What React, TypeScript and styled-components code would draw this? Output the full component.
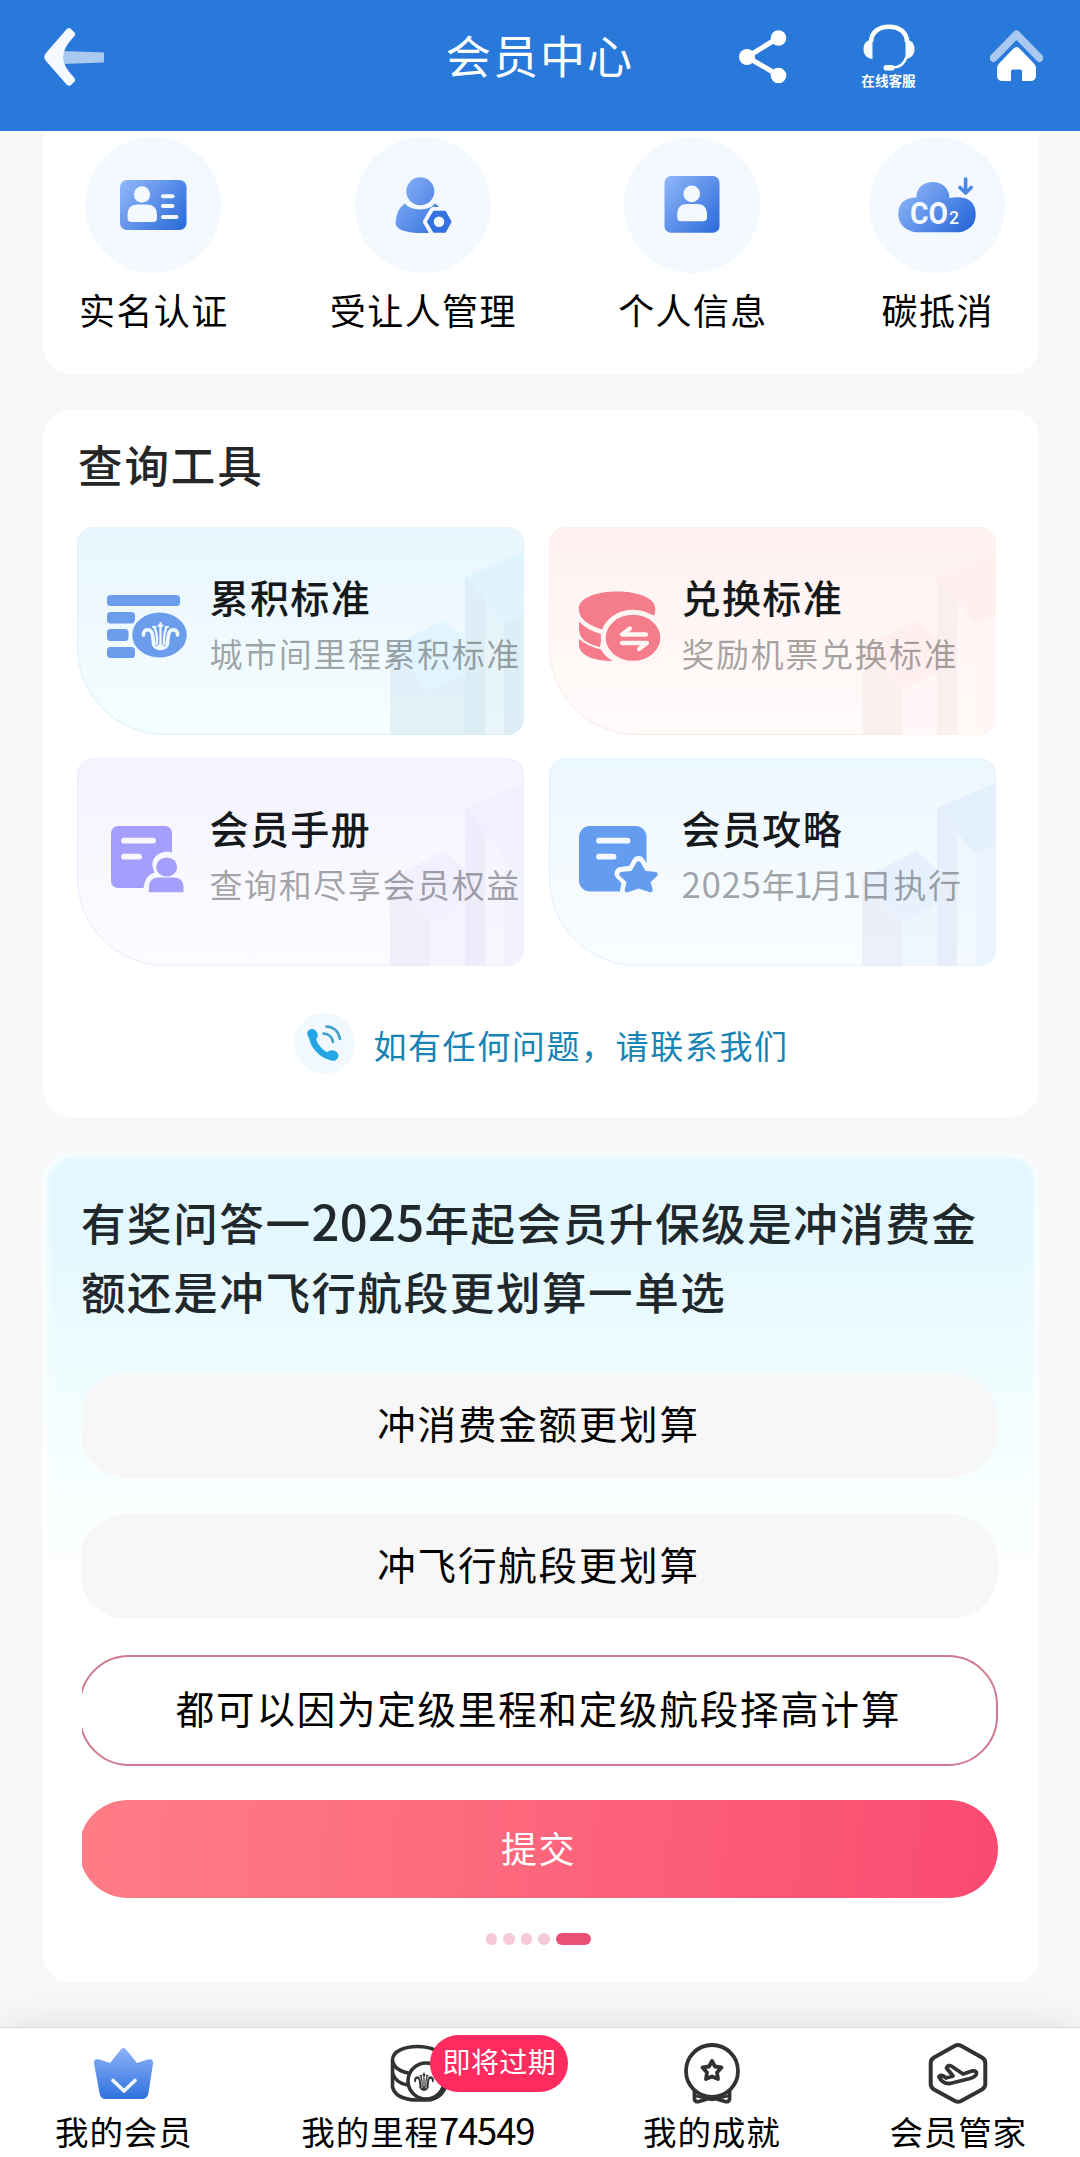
import React from "react";
import styled, { createGlobalStyle } from "styled-components";

const GlobalStyle = createGlobalStyle`
  * { box-sizing: border-box; }
  body {
    margin: 0;
    background: #f8f8f8;
    font-family: "Noto Sans CJK SC", "Noto Sans", sans-serif;
    color: #000;
  }
  button { font: inherit; border: 0; padding: 0; background: none; color: inherit; }
  h1, h2, h3, p { margin: 0; font-weight: 400; }
  svg { display: block; flex: none; }
`;

const Screen = styled.div`
  width: 1080px;
  height: 2157px;
  display: flex;
  flex-direction: column;
  overflow: hidden;
  background: #f8f8f8;
`;

/* ---------- header ---------- */

const Header = styled.header`
  flex: none;
  height: 131px;
  padding: 0 37px 18px 44px;
  display: grid;
  grid-template-columns: 1fr auto 1fr;
  align-items: center;
  background: #2979db;
  color: #fff;
`;

const HeaderTitle = styled.h1`
  font-size: 45px;
  line-height: 60px;
  letter-spacing: 2.1px;
  margin-left: -7px;
  padding-bottom: 3px;
`;

const HeaderActions = styled.div`
  display: flex;
  justify-content: flex-end;
  align-items: center;
  gap: 74px;
`;

const Service = styled.div`
  display: flex;
  flex-direction: column;
  align-items: center;
  width: 55px;
  padding-bottom: 2px;
`;

const ServiceLabel = styled.span`
  font-size: 13.6px;
  line-height: 16px;
  font-weight: 700;
  white-space: nowrap;
`;

/* ---------- cards ---------- */

const Content = styled.main`
  flex: none;
  height: 1896px;
  padding: 0 41px 0 43px;
  display: flex;
  flex-direction: column;
  gap: 36px;
`;

const ShortcutCard = styled.section`
  flex: none;
  height: 243px;
  padding: 6px 34px 0 36px;
  display: flex;
  justify-content: space-between;
  background: #fff;
  border-radius: 0 0 28px 28px;
`;

const Shortcut = styled.div`
  display: flex;
  flex-direction: column;
  align-items: center;
  gap: 12px;
`;

const ShortcutCircle = styled.div`
  width: 136px;
  height: 136px;
  border-radius: 50%;
  background: #f3f9ff;
`;

const ShortcutLabel = styled.span`
  font-size: 36px;
  line-height: 48px;
  letter-spacing: 1.4px;
  margin-right: -1.4px;
  white-space: nowrap;
`;

const ToolCard = styled.section`
  flex: none;
  height: 707px;
  padding: 25px 44px 0 34px;
  background: #fff;
  border-radius: 28px;
`;

const SectionTitle = styled.h2`
  font-size: 44.5px;
  line-height: 58px;
  letter-spacing: 1.9px;
  font-weight: 500;
  color: #262626;
  padding-left: 1px;
`;

const TileGrid = styled.div`
  margin-top: 34px;
  display: grid;
  grid-template-columns: 447px 447px;
  column-gap: 25px;
  row-gap: 23.5px;
`;

const Tile = styled.div<{ $top: string; $bottom: string; $edge: string }>`
  position: relative;
  height: 207.5px;
  padding: 0 0 8px 26px;
  display: flex;
  align-items: center;
  gap: 16.5px;
  overflow: hidden;
  border-radius: 17px 17px 17px 88px;
  background: linear-gradient(180deg, ${(p) => p.$top}, ${(p) => p.$bottom});
  box-shadow: inset 0 -1px 1px ${(p) => p.$edge}, inset 0 0 1px 1px ${(p) => p.$edge};
`;

const TileBackdrop = styled.svg`
  position: absolute;
  inset: 0;
`;

const TileText = styled.div`
  position: relative;
  display: flex;
  flex-direction: column;
  gap: 7px;
  margin-top: -6px;
`;

const TileTitle = styled.h3`
  font-size: 39px;
  line-height: 52px;
  letter-spacing: 1.4px;
  font-weight: 500;
  color: #15191c;
  white-space: nowrap;
`;

const TileSubtitle = styled.p`
  height: 48px;
  font-size: 33px;
  line-height: 48px;
  letter-spacing: 1.6px;
  color: rgba(20, 20, 20, 0.38);
  white-space: nowrap;
`;

/* Numerals run larger than the Chinese glyphs beside them. */
const Digits = styled.span<{ $size: number; $spacing: number; $tuck?: number }>`
  font-size: ${(p) => p.$size}px;
  line-height: 1;
  letter-spacing: ${(p) => p.$spacing}px;
  margin: 0 ${(p) => -(p.$tuck ?? 0)}px;
`;

const Contact = styled.div`
  margin-top: 47px;
  display: flex;
  justify-content: center;
  align-items: center;
  gap: 18px;
  padding-left: 11px;
`;

const ContactIcon = styled.div`
  width: 61px;
  height: 61px;
  border-radius: 50%;
  background: #f1f9ff;
`;

const ContactText = styled.span`
  font-size: 33px;
  line-height: 48px;
  letter-spacing: 1.6px;
  color: #1684b5;
  padding-top: 4px;
`;

/* ---------- quiz ---------- */

const QuizCard = styled.section`
  flex: none;
  height: 830px;
  padding: 34px 41px 0 39px;
  display: flex;
  flex-direction: column;
  border-radius: 28px;
  box-shadow: inset 0 0 7px 4px #fff;
  background: linear-gradient(180deg, #e1f7ff 0, #e5f8ff 100px, #ebfcff 180px, #f2fdff 260px, #fafffF 360px, #fff 440px);
`;

const Question = styled.h2`
  height: 186px;
  margin-left: -1px;
  font-size: 44.5px;
  line-height: 69px;
  letter-spacing: 1.6px;
  font-weight: 500;
  color: #20282b;
  white-space: nowrap;
`;

const Answers = styled.div`
  display: flex;
  flex-direction: column;
  overflow: hidden;
`;

const Option = styled.button<{ $selected?: boolean }>`
  flex: none;
  height: ${(p) => (p.$selected ? 111 : 105)}px;
  margin: 0 0 ${(p) => (p.$selected ? 34 : 36)}px -3px;
  border-radius: ${(p) => (p.$selected ? 50 : 48)}px;
  border: ${(p) => (p.$selected ? "2px solid #cf7a8d" : "0")};
  background: ${(p) => (p.$selected ? "#fff" : "#f7f7f7")};
  font-size: 38.5px;
  line-height: 50px;
  letter-spacing: 1.8px;
  padding-bottom: 7px;
`;

const Submit = styled.button`
  flex: none;
  height: 98px;
  margin-left: -3px;
  border-radius: 49px;
  padding-bottom: 4px;
  background: linear-gradient(95deg, #ff7d86 0%, #fc667c 50%, #f94a70 100%);
  color: #fff;
  font-size: 36px;
  letter-spacing: 1.5px;
`;

const Dots = styled.div`
  margin-top: 35px;
  display: flex;
  justify-content: center;
  gap: 6px;
  padding-right: 4px;
`;

const Dot = styled.i<{ $active?: boolean }>`
  width: ${(p) => (p.$active ? 35 : 11.5)}px;
  height: 12px;
  border-radius: 6px;
  background: ${(p) => (p.$active ? "#ea5075" : "#f5c9d8")};
`;

/* ---------- tab bar ---------- */

const TabBar = styled.nav`
  flex: none;
  height: 130px;
  padding: 14px 53px 0 55px;
  display: flex;
  justify-content: space-between;
  background: #fff;
  border-top: 1px solid #d9d9d9;
  box-shadow: 0 0 40px rgba(0, 0, 0, 0.11);
`;

const Tab = styled.div`
  position: relative;
  display: flex;
  flex-direction: column;
  align-items: center;
`;

const TabLabel = styled.span`
  height: 48px;
  margin-top: 3px;
  font-size: 33.5px;
  line-height: 48px;
  letter-spacing: 0.9px;
  white-space: nowrap;
`;

const Badge = styled.span`
  position: absolute;
  left: 129px;
  top: -7px;
  width: 138px;
  height: 57px;
  border-radius: 29px;
  background: #ff2b5e;
  color: #fff;
  font-size: 28px;
  line-height: 53px;
  letter-spacing: 0.4px;
  text-align: center;
`;

/* ---------- icons ---------- */

const BackIcon = () => (
  <svg width="60" height="58" viewBox="0 0 60 58">
    <path d="M18 23L60 24.500V34.500L18 36Z" fill="#a9c9f1" />
    <path d="M23 .8Q25-.7 27 1L30.500 4.500Q32 6 30 8.500Q19 20 19 29Q19 38 30 49.500Q32 52 30.500 53.500L27 57Q25 58.500 23 57L2 33Q-1.500 29 2 25Z" fill="#f4faff" />
  </svg>
);

const ShareIcon = () => (
  <svg width="48" height="54" viewBox="0 0 48 54">
    <path d="M8 27L39 8M8 27L39 45" stroke="#fff" strokeWidth="5" />
    <circle cx="8" cy="27" r="8" fill="#fff" />
    <circle cx="39.500" cy="8" r="7.800" fill="#fff" />
    <circle cx="39.500" cy="45.500" r="7.800" fill="#fff" />
  </svg>
);

const HeadsetIcon = () => (
  <svg width="52" height="48" viewBox="0 0 52 48">
    <path d="M8 18C8 8 16 2.800 26 2.800S44 8 44 18" fill="none" stroke="#fff" strokeWidth="4.600" />
    <path d="M9.500 15.500C3 16 .5 20 .5 25C.5 31 4 34.500 9.500 35Z" fill="#f4faff" />
    <path d="M42.500 15.500C49 16 51.500 20 51.500 25C51.500 31 48 34.500 42.500 35Z" fill="#f4faff" />
    <path d="M43.500 33C41.500 39 37 43.500 30 43.500" fill="none" stroke="#fff" strokeWidth="2.600" />
    <rect x="20.500" y="41" width="11" height="5.600" rx="2.800" fill="#fff" />
  </svg>
);

const HomeIcon = () => (
  <svg width="53" height="54" viewBox="0 0 53 54">
    <path d="M3.500 28L26.500 4.500L49.500 28" fill="none" stroke="#a9c9f1" strokeWidth="7.800" strokeLinejoin="round" strokeLinecap="round" />
    <path d="M23.500 18.500Q26.500 15.500 29.500 18.500L44 33.500Q46 36 46 38V45Q46 51 40.500 51H32V41.500Q32 39.500 30 39.500H23Q21 39.500 21 41.500V51H12.500Q7 51 7 45V38Q7 36 9 33.500Z" fill="#fff" />
  </svg>
);

const Blue = ({ id }: { id: string }) => (
  <defs>
    <linearGradient id={id} x1="35" y1="42" x2="98" y2="96" gradientUnits="userSpaceOnUse">
      <stop offset="0" stopColor="#93b9fb" />
      <stop offset="1" stopColor="#2768d8" />
    </linearGradient>
  </defs>
);

const IdCardIcon = () => (
  <svg width="136" height="136" viewBox="0 0 136 136">
    <Blue id="b1" />
    <rect x="35" y="43" width="66.500" height="50" rx="7" fill="url(#b1)" />
    <g fill="#f3f9ff">
      <circle cx="57" cy="57.500" r="8.200" />
      <path d="M42.500 78Q42.500 67.500 52 67.500H62.500Q72 67.500 72 78V81Q72 85 68 85H46.500Q42.500 85 42.500 81Z" />
      <rect x="76" y="57.300" width="13.500" height="4" rx="2" />
      <rect x="76" y="67" width="13.500" height="4" rx="2" />
      <rect x="76" y="78" width="17.500" height="4" rx="2" />
    </g>
  </svg>
);

const TransfereeIcon = () => (
  <svg width="136" height="136" viewBox="0 0 136 136">
    <Blue id="b2" />
    <circle cx="65.300" cy="54.300" r="14" fill="url(#b2)" />
    <path d="M50 66.300C55 74.500 75 74.500 80 66.300Q92 75 92 88L80 95.700Q40.500 98 40.500 85.500Q41.500 72 50 66.300Z" fill="url(#b2)" />
    <path d="M78 73.500H91L97 84.700L91 96H78L71.500 84.700Z" fill="#3272de" stroke="#f3f9ff" strokeWidth="7" strokeLinejoin="round" />
    <path d="M79 74.700H90L95.500 84.700L90 94.700H79L73 84.700Z" fill="#3272de" stroke="#3272de" strokeWidth="2" strokeLinejoin="round" />
    <circle cx="84" cy="84.700" r="5.300" fill="#f3f9ff" />
  </svg>
);

const ProfileIcon = () => (
  <svg width="136" height="136" viewBox="0 0 136 136">
    <Blue id="b3" />
    <rect x="40.500" y="39" width="55" height="56.700" rx="6.500" fill="url(#b3)" />
    <circle cx="67.700" cy="56.900" r="8.300" fill="#f3f9ff" />
    <path d="M53.200 78Q53.200 67 63 67H73Q83 67 83 78V80.500Q83 84.300 79 84.300H57.200Q53.200 84.300 53.200 80.500Z" fill="#f3f9ff" />
  </svg>
);

const CarbonIcon = () => (
  <svg width="136" height="136" viewBox="0 0 136 136">
    <Blue id="b4" />
    <path d="M47.300 60.500C47.500 39.500 80.300 40 80.500 61Q106.700 57 106.700 78Q106.700 91 91.500 95.300H45.500Q29.300 91 29.300 77Q29.300 61 47.300 60.500Z" fill="url(#b4)" />
    <path d="M96.600 42V55M91 50.500L96.600 56L102.200 50.500" fill="none" stroke="#4d87e5" strokeWidth="3.600" strokeLinecap="round" strokeLinejoin="round" />
    <text x="41" y="87" fontFamily="Roboto, sans-serif" fontWeight="700" fontSize="32" textLength="38" lengthAdjust="spacingAndGlyphs" fill="#f3f9ff">CO</text>
    <text x="80" y="87" fontFamily="Roboto, sans-serif" fontWeight="500" fontSize="19" textLength="10" lengthAdjust="spacingAndGlyphs" fill="#f3f9ff">2</text>
  </svg>
);

/* Flowering crest used on the mileage coins. */
const Crest = ({ color }: { color: string }) => (
  <g fill="none" stroke={color} strokeLinecap="round">
    <path d="M-17 0C-18-6-10-7-8.500-2C-7 3-7.500 6-6.500 9M17 0C18-6 10-7 8.500-2C7 3 7.500 6 6.500 9" strokeWidth="3.600" />
    <path d="M-3.500 9C-3-1-5-5-6-8M3.500 9C3-1 5-5 6-8M0 9V-9" strokeWidth="2.300" />
    <path d="M-2-9.500H2M-7.500-8H-5M5-8H7.500M0-12V-8" strokeWidth="2.200" />
    <path d="M-9 7L-4 11.500L0 8L4 11.500L9 7C9 18-9 18-9 7Z" fill={color} stroke="none" />
  </g>
);

const AccrualIcon = () => (
  <svg width="90" height="80" viewBox="0 0 90 80">
    <g fill="#6b9dec">
      <rect x="4" y="8" width="73" height="11" rx="3.500" />
      <rect x="4" y="25" width="28" height="11.500" rx="3.500" />
      <rect x="4" y="42" width="21.500" height="12" rx="3.500" />
      <rect x="4" y="60" width="28" height="11" rx="3.500" />
      <ellipse cx="56.500" cy="48" rx="28.500" ry="23.800" stroke="#f0fbff" strokeWidth="2.500" />
    </g>
    <g transform="translate(57.500 48)"><Crest color="#f0fbff" /></g>
  </svg>
);

const RedeemIcon = () => (
  <svg width="90" height="80" viewBox="0 0 90 80">
    <g fill="#f47c8b">
      <path d="M3.700 21.500C4-1.300 80-1.300 80.300 21.500Q80.500 26 79 28.500L60 23Q33 24 29 43C15 39 4 33 3.700 21.500Z" />
      <path d="M4 34.500Q12 43 27 47.500L25 60C12 57 3.700 52 4 41Z" />
      <path d="M4 52Q12 59 26 62.500Q30 70 38 74C18 74 3.500 68 4 57Z" />
      <ellipse cx="58" cy="50.800" rx="29.800" ry="25.500" stroke="#fff6f4" strokeWidth="5" />
    </g>
    <path d="M71 47.500H47L55 41.500M47 56H72L64 62" fill="none" stroke="#fff6f4" strokeWidth="4.300" strokeLinecap="round" strokeLinejoin="round" />
  </svg>
);

const HandbookIcon = () => (
  <svg width="90" height="80" viewBox="0 0 90 80">
    <rect x="8" y="8" width="61" height="62" rx="7" fill="#a49ffc" />
    <g fill="none" stroke="#f9f8ff" strokeWidth="5.800" strokeLinecap="round">
      <path d="M21 22.700H50M21 38.700H36" />
    </g>
    <path d="M40.500 80V70Q42 57 51.500 54.500C42 34 70 28 77 40L84 60V80Z" fill="#f9f8fe" />
    <ellipse cx="63.700" cy="49" rx="10.500" ry="9.500" fill="#a49ffc" />
    <path d="M46 74.200V69Q46 59.500 56 59.500H70Q80.500 59.500 80.500 69V74.200Z" fill="#a49ffc" />
  </svg>
);

const GuideIcon = () => (
  <svg width="90" height="80" viewBox="0 0 90 80">
    <rect x="4" y="8" width="67.500" height="65.500" rx="11" fill="#649df0" />
    <g fill="none" stroke="#f3faff" strokeWidth="5.800" strokeLinecap="round">
      <path d="M24 22.700H52.500M24 38.700H38.500" />
    </g>
    <path d="M63.500 44.500L69 54L81.500 55.500L73.500 63L76 73L63.500 69.500L51.500 73L53.500 63L46 55.500L58 54Z" fill="#f5faff" stroke="#f5faff" strokeWidth="13" strokeLinejoin="round" />
    <path d="M63.500 45.500L69 55L80.500 56.300L73 63.500L75.500 72L63.500 68L52 72L54 63.500L46.500 56.300L58 55Z" fill="#649df0" stroke="#649df0" strokeWidth="4.500" strokeLinejoin="round" />
  </svg>
);

const PhoneIcon = () => (
  <svg width="61" height="61" viewBox="0 0 61 61" fill="none">
    <path d="M18 21C18 32 28 43.500 39 44" stroke="#22a6e4" strokeWidth="6.500" />
    <ellipse cx="18.500" cy="21.500" rx="5.800" ry="5" transform="rotate(55 18.500 21.500)" fill="#22a6e4" />
    <ellipse cx="38.500" cy="42.500" rx="6" ry="5.200" transform="rotate(15 38.500 42.500)" fill="#22a6e4" />
    <path d="M32.500 13.500Q43.500 14 46 26M29.500 20.500Q37.500 21 39 29" stroke="#419fcb" strokeWidth="2.600" strokeLinecap="round" />
  </svg>
);

const CrownIcon = () => (
  <svg width="62" height="62" viewBox="0 0 62 62">
    <defs>
      <linearGradient id="crown" x1="0" y1="0" x2="0" y2="1">
        <stop offset="0" stopColor="#8eb3f8" />
        <stop offset="1" stopColor="#2f70dd" />
      </linearGradient>
    </defs>
    <path d="M27.500 8Q30.500 4 33.500 8L44 21L54.500 17.500Q60.500 16 60 21.500L55.500 51Q54.500 57 48.500 57H12.500Q7.500 57 6.500 51L1 21.500Q.5 16 6.500 17.500L17 21Z" fill="url(#crown)" />
    <path d="M20 38.500L31 49L42 38.500" fill="none" stroke="#f6faff" strokeWidth="3.600" strokeLinecap="round" strokeLinejoin="round" />
  </svg>
);

const CoinsIcon = () => (
  <svg width="60" height="62" viewBox="-1.500 0 60 62" fill="none" stroke="#303234" strokeWidth="3.600">
    <path d="M3 18C3 0 53 0 53 18M3 18Q4 28 19 31M3 18V45Q6 57 26 58H38Q51 57 56 45M3 31Q6 41 18 43" />
    <circle cx="36.500" cy="39" r="18" fill="#fff" />
    <g transform="translate(34.500 39) scale(.52 .66)"><Crest color="#303234" /></g>
  </svg>
);

const MedalIcon = () => (
  <svg width="60" height="62" viewBox="0 0 60 62" fill="none" stroke="#303234" strokeWidth="3.800" strokeLinejoin="round">
    <path d="M12.500 46V57Q12.500 60.500 17 59.500L30 55.500L43 59.500Q47.500 60.500 47.500 57V46" />
    <path d="M14 54L30 58L46 54" strokeWidth="2.500" />
    <circle cx="30" cy="29" r="26" fill="#fff" />
    <path d="M30 19L33 24.500L39.500 25.500L35 30.500L36 37L30 34.500L24 37L25 30.500L20.500 25.500L27 24.500Z" strokeWidth="3.800" />
  </svg>
);

const StewardIcon = () => (
  <svg width="62" height="62" viewBox="0 0 60 62" fill="none" stroke="#303234" strokeWidth="4" strokeLinejoin="round" strokeLinecap="round">
    <path d="M27 3.800Q30 2 33 3.800L54 15.500Q57.300 17.500 57.300 21V42Q57.300 45.500 54 47.500L33 59Q30 60.500 27 59L6 47.500Q2.700 45.500 2.700 42V21Q2.700 17.500 6 15.500Z" />
    <path d="M11 34.500Q14 32 18 36L25 34L18.500 26Q20 22 24 24.500L35 32L44 29Q49 28.500 48.500 31.500Q48 34.500 42 36.500L22 41.500Q14 42 11 34.500Z" strokeWidth="3.800" />
  </svg>
);

/* ---------- data ---------- */

const shortcuts = [
  { label: "实名认证", Icon: IdCardIcon },
  { label: "受让人管理", Icon: TransfereeIcon },
  { label: "个人信息", Icon: ProfileIcon },
  { label: "碳抵消", Icon: CarbonIcon },
];

const effectiveDate = (
  <>
    <Digits $size={35} $spacing={0.6}>2025</Digits>年
    <Digits $size={35} $spacing={0.6} $tuck={3}>1</Digits>月
    <Digits $size={35} $spacing={0.6} $tuck={3}>1</Digits>日执行
  </>
);

const tools = [
  { title: "累积标准", sub: "城市间里程累积标准", Icon: AccrualIcon, top: "#e9f6ff", bottom: "#f5feff", edge: "#e2f4f9", roof: "#def3ff", side: "#dbecf5", front: "#daecf5" },
  { title: "兑换标准", sub: "奖励机票兑换标准", Icon: RedeemIcon, top: "#fff1f0", bottom: "#fffcfb", edge: "#fdeeec", roof: "#ffeeed", side: "#f9ebec", front: "#fff6f5" },
  { title: "会员手册", sub: "查询和尽享会员权益", Icon: HandbookIcon, top: "#f4f3ff", bottom: "#fcfcff", edge: "#efeefa", roof: "#f1efff", side: "#eceafa", front: "#f1f0fe" },
  { title: "会员攻略", sub: effectiveDate, Icon: GuideIcon, top: "#ebf7ff", bottom: "#fbfdff", edge: "#e9f2fc", roof: "#e3effd", side: "#e5ebf7", front: "#e9f3ff" },
];

const tabs = [
  { label: "我的会员", Icon: CrownIcon },
  { label: "我的里程", miles: "74549", Icon: CoinsIcon, badge: "即将过期" },
  { label: "我的成就", Icon: MedalIcon },
  { label: "会员管家", Icon: StewardIcon },
];

const Towers = ({ roof, side, front }: { roof: string; side: string; front: string }) => (
  <TileBackdrop width="447" height="208" viewBox="0 0 447 208">
    <path d="M388 50L447 25V208H388Z" fill={front} opacity=".45" />
    <path d="M388 50L447 25V86L427 97Z" fill={roof} opacity=".85" />
    <path d="M388 50L408 74V208H388Z" fill={side} opacity=".75" />
    <path d="M427 97L447 87V208H427Z" fill={front} opacity=".8" />
    <path d="M313 120L367 93L388 111V146L355 164Z" fill={roof} opacity=".85" />
    <path d="M313 120L353 163V208H313Z" fill={side} opacity=".75" />
    <path d="M353 163L408 138V208H353Z" fill={front} opacity=".75" />
    <path d="M388 146V208H408V138Z" fill={side} opacity=".6" />
  </TileBackdrop>
);

export default function App() {
  return (
    <>
      <GlobalStyle />
      <Screen>
        <Header>
          <BackIcon />
          <HeaderTitle>会员中心</HeaderTitle>
          <HeaderActions>
            <ShareIcon />
            <Service>
              <HeadsetIcon />
              <ServiceLabel>在线客服</ServiceLabel>
            </Service>
            <HomeIcon />
          </HeaderActions>
        </Header>

        <Content>
          <ShortcutCard>
            {shortcuts.map(({ label, Icon }) => (
              <Shortcut key={label}>
                <ShortcutCircle><Icon /></ShortcutCircle>
                <ShortcutLabel>{label}</ShortcutLabel>
              </Shortcut>
            ))}
          </ShortcutCard>

          <ToolCard>
            <SectionTitle>查询工具</SectionTitle>
            <TileGrid>
              {tools.map(({ title, sub, Icon, top, bottom, edge, roof, side, front }) => (
                <Tile key={title} $top={top} $bottom={bottom} $edge={edge}>
                  <Towers roof={roof} side={side} front={front} />
                  <Icon />
                  <TileText>
                    <TileTitle>{title}</TileTitle>
                    <TileSubtitle>{sub}</TileSubtitle>
                  </TileText>
                </Tile>
              ))}
            </TileGrid>
            <Contact>
              <ContactIcon><PhoneIcon /></ContactIcon>
              <ContactText>如有任何问题，请联系我们</ContactText>
            </Contact>
          </ToolCard>

          <QuizCard>
            <Question>
              有奖问答一<Digits $size={49} $spacing={0.3}>2025</Digits>年起会员升保级是冲消费金
              <br />
              额还是冲飞行航段更划算一单选
            </Question>
            <Answers>
              <Option>冲消费金额更划算</Option>
              <Option>冲飞行航段更划算</Option>
              <Option $selected>都可以因为定级里程和定级航段择高计算</Option>
              <Submit>提交</Submit>
            </Answers>
            <Dots>
              <Dot /><Dot /><Dot /><Dot /><Dot $active />
            </Dots>
          </QuizCard>
        </Content>

        <TabBar>
          {tabs.map(({ label, miles, Icon, badge }) => (
            <Tab key={label}>
              <Icon />
              {badge && <Badge>{badge}</Badge>}
              <TabLabel>
                {label}
                {miles && <Digits $size={36.5} $spacing={-1.2}>{miles}</Digits>}
              </TabLabel>
            </Tab>
          ))}
        </TabBar>
      </Screen>
    </>
  );
}
